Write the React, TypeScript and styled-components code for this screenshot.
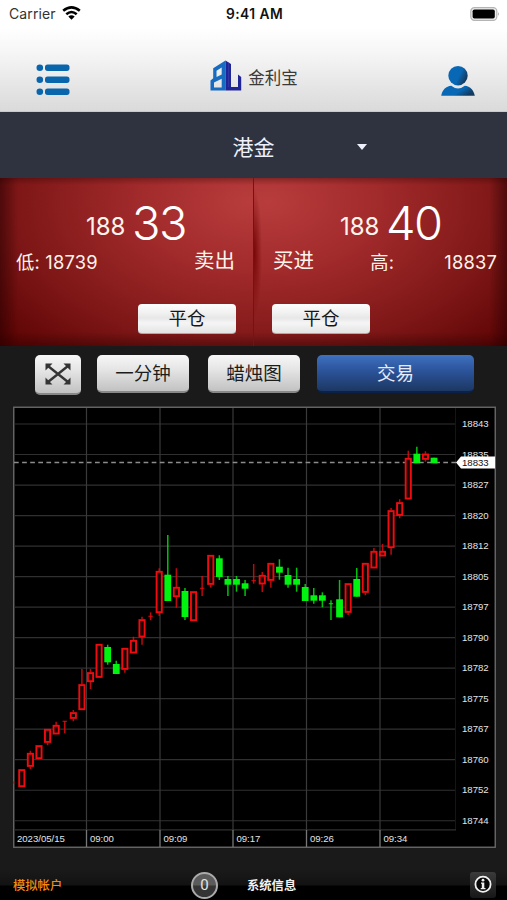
import React from "react";
import styled, { createGlobalStyle } from "styled-components";

const GlobalStyle = createGlobalStyle`
  * { box-sizing: border-box; }
  body {
    margin: 0;
    background: #1a1a1a;
    font-family: Inter, "Noto Sans CJK SC", sans-serif;
    overflow: hidden;
  }
`;

const Screen = styled.div`
  width: 507px;
  height: 900px;
  display: flex;
  flex-direction: column;
  background: #1a1a1a;
`;

const Top = styled.header`
  height: 112px;
  background: linear-gradient(#fff 0, #fff 28px, #f7f7f7 50px, #dadada 111px, #c9cacc 111px);
`;

const StatusBar = styled.div`
  display: grid;
  grid-template-columns: 1fr auto 1fr;
  align-items: center;
  height: 28px;
  padding: 0 7px 0 9px;
  font-size: 14px;
  line-height: 28px;
  color: #111;
`;

const Carrier = styled.div`
  display: flex;
  align-items: center;
  gap: 6px;
  color: #333;
  letter-spacing: 0.1px;

  svg { margin-top: -2px; }
`;

const Clock = styled.div`
  font-size: 13.8px;
  font-weight: 600;
  letter-spacing: 0.45px;
`;

const BatterySlot = styled.div`
  display: flex;
  justify-content: flex-end;
  margin-top: -1px;
`;

const NavBar = styled.div`
  display: grid;
  grid-template-columns: 1fr auto 1fr;
  height: 83px;
  padding: 31px 31px 0 36px;
`;

const NavButton = styled.button<{ $end?: boolean }>`
  display: flex;
  justify-self: ${(p) => (p.$end ? "end" : "start")};
  align-self: start;
  padding: ${(p) => (p.$end ? "6px 0 0" : "5px 0 0")};
  border: 0;
  background: none;
`;

const Brand = styled.div`
  display: flex;
  align-items: flex-start;
  gap: 6px;
  margin-right: 4px;
  padding-top: 1px;
`;

const BrandName = styled.span`
  font-size: 16.5px;
  line-height: 20px;
  margin-top: 8px;
  color: #3a3a3a;
`;

const SymbolBar = styled.div`
  display: grid;
  grid-template-columns: 1fr auto 1fr;
  align-items: center;
  height: 66px;
  padding-top: 2px;
  background: #2f333f;
  color: #eef1fb;
  font-size: 21px;
`;

const Caret = styled.span`
  margin-left: 82px;
  width: 0;
  margin-top: 2px;
  border: 5.5px solid transparent;
  border-top: 6px solid #eef1fb;
  border-bottom: 0;
`;

const Quotes = styled.section`
  display: grid;
  grid-template-columns: 254px 253px;
  height: 168px;
`;

const QuotePanel = styled.div<{ $side: "sell" | "buy" }>`
  padding-top: 20px;
  color: #fff4ec;
  background: ${(p) =>
    p.$side === "sell"
      ? "linear-gradient(90deg, rgba(35,0,0,.5), rgba(35,0,0,0) 18px), linear-gradient(rgba(40,0,0,.3), transparent 7px), linear-gradient(0deg, rgba(40,0,0,.4), transparent 14px), radial-gradient(330px 205px at 250px 24px, #b83c3c 0%, #a12a2b 34%, #7d1616 72%, #5c0303 100%)"
      : "linear-gradient(270deg, rgba(35,0,0,.5), rgba(35,0,0,0) 18px), linear-gradient(rgba(40,0,0,.3), transparent 7px), linear-gradient(0deg, rgba(40,0,0,.4), transparent 14px), radial-gradient(8px 65px at 0 75px, rgba(110,0,0,.85), transparent), radial-gradient(330px 205px at 14px 24px, #b83c3c 0%, #a12a2b 34%, #7d1616 72%, #5c0303 100%)"};
  border-right: ${(p) => (p.$side === "sell" ? "1px solid #701416" : "0")};
`;

const Price = styled.div`
  display: flex;
  height: 50px;
  padding-left: 86px;
`;

const PriceBase = styled.span`
  width: 46px;
  font-size: 24px;
  line-height: 50px;
  padding-top: 4px;
  letter-spacing: -0.1px;
`;

const PricePips = styled.span`
  font-size: 47px;
  font-weight: 350;
  line-height: 49px;
  letter-spacing: -1.6px;
  color: #fff;
`;

const Details = styled.div<{ $side: "sell" | "buy" }>`
  display: flex;
  justify-content: space-between;
  height: 28px;
  padding: ${(p) => (p.$side === "sell" ? "0 18px 0 16px" : "0 10px 0 19px")};
  line-height: 28px;
`;

const Extreme = styled.span<{ $shift?: boolean }>`
  margin-left: ${(p) => (p.$shift ? "6px" : "0")};
  font-size: 18.3px;
  letter-spacing: 0.2px;
`;

const Action = styled.span`
  font-size: 20.5px;
  line-height: 25px;
`;

const metal = "linear-gradient(#fdfdfd, #f1f1f1 30%, #e7e7e7 48%, #f5f5f5 65%, #e4e4e4)";

const CloseButton = styled.button<{ $side: "sell" | "buy" }>`
  display: block;
  width: 98px;
  height: 30px;
  margin: 28px 0 0 ${(p) => (p.$side === "sell" ? "138px" : "18px")};
  padding: 0;
  border: 0;
  border-bottom: 1px solid #aaa;
  border-radius: 4px;
  background: ${metal};
  color: #171717;
  font: 18.5px/29px Inter, "Noto Sans CJK SC", sans-serif;
`;

const Toolbar = styled.div`
  display: grid;
  grid-template-columns: 46px 92px 92px 157px;
  column-gap: 17px;
  align-items: start;
  height: 60px;
  padding: 9px 0 0 35px;
`;

const ToolButton = styled.button<{ $kind?: "icon" | "primary"; $nudge?: number }>`
  display: flex;
  align-items: center;
  justify-content: center;
  height: ${(p) => (p.$kind === "icon" ? "40px" : "38px")};
  margin: 0 ${(p) => -(p.$nudge ?? 0)}px 0 ${(p) => p.$nudge ?? 0}px;
  padding: 0;
  border: 0;
  border-bottom: 2px solid ${(p) => (p.$kind === "primary" ? "#0b2147" : "#888")};
  border-radius: 5px;
  background: ${(p) =>
    p.$kind === "primary"
      ? "linear-gradient(#3e71bf, #2b5399 45%, #1c3763)"
      : "linear-gradient(#f7f7f7, #e5e5e5 40%, #c2c2c2)"};
  color: ${(p) => (p.$kind === "primary" ? "#e4ecfc" : "#1c1c1c")};
  font: 18.5px/36px Inter, "Noto Sans CJK SC", sans-serif;
`;

const ChartFrame = styled.div`
  height: 442px;
  padding-left: 13px;

  svg { display: block; }
`;

const Footer = styled.footer`
  display: flex;
  align-items: center;
  height: 30px;
  margin-top: 22px;
  padding: 0 11px 0 13px;
  background: linear-gradient(#1a1a1a, #121212 15px, #000 16px);
  font-size: 12.3px;
  font-weight: 500;
`;

const Account = styled.span`
  width: 178px;
  color: #f58a0c;
`;

const Badge = styled.span`
  display: grid;
  place-items: center;
  width: 27px;
  height: 27px;
  border: 2px solid #aaa;
  border-radius: 50%;
  background: linear-gradient(#5b5b5b 48%, #343434 52%);
  color: #e5e5e5;
  font-size: 15px;
  font-family: Roboto, sans-serif;
  font-weight: 400;
`;

const Info = styled.span`
  flex: 1;
  margin-left: 29px;
  color: #f2f2f2;
  font-weight: 700;
`;

const InfoButton = styled.button`
  display: grid;
  place-items: center;
  width: 26px;
  height: 26px;
  padding: 0;
  border: 0;
  border-radius: 3px;
  background: linear-gradient(#3b3b3b, #171717);
`;

const X0 = 21.8;
const STEP = 8.588;

// direction, body top, body bottom, wick top, wick bottom
type Candle = ["r" | "g", number, number, number, number];
const candles: Candle[] = [
  ["r", 769.3, 787, 769.3, 787],
  ["r", 753, 766.7, 750.7, 769.3],
  ["r", 745.3, 759, 745.3, 759],
  ["r", 729, 742.7, 729, 745.3],
  ["r", 725, 734.3, 721.7, 734.3],
  ["r", 721.3, 721.3, 721, 733.3],
  ["r", 712.3, 718.7, 710, 721.3],
  ["r", 684.3, 710, 669, 710],
  ["r", 672.3, 682, 669, 689],
  ["r", 644, 677.7, 644, 677.7],
  ["g", 647, 662.3, 644.7, 664.7],
  ["g", 664, 674, 660.7, 674],
  ["r", 648, 669.7, 648, 672.7],
  ["r", 640, 653.3, 636.7, 653.3],
  ["r", 619.3, 637.3, 616.7, 644.7],
  ["r", 616.3, 616.3, 612.3, 620.3],
  ["r", 571, 613, 568.3, 616],
  ["g", 574.7, 601, 535, 601],
  ["r", 587, 597, 568.3, 607.7],
  ["g", 591, 617, 588, 620],
  ["r", 591.3, 621, 591.3, 621],
  ["r", 588.3, 588.3, 576, 596],
  ["r", 555, 584.7, 555, 587.7],
  ["g", 558.3, 577, 555.3, 580],
  ["g", 579, 584.7, 576, 596],
  ["g", 579, 584.7, 576, 591.7],
  ["g", 583.3, 588.7, 580, 596],
  ["r", 580.7, 580.7, 564, 583.7],
  ["r", 575, 584.3, 572, 592],
  ["r", 563, 580.7, 563, 587.7],
  ["g", 566.7, 572.7, 559.3, 579.7],
  ["g", 575, 584.7, 567.7, 587.7],
  ["g", 579, 584.7, 567.7, 591.7],
  ["g", 587, 601, 584, 601],
  ["g", 595.3, 600.7, 588, 603.7],
  ["g", 595.3, 600.7, 592.3, 607.3],
  ["g", 603.7, 603.7, 600.3, 620],
  ["g", 599.3, 617.3, 580, 617.3],
  ["r", 583.3, 612.7, 583.3, 615],
  ["g", 579, 596.7, 568, 596.7],
  ["r", 563, 592.7, 563, 595.3],
  ["r", 551, 568.3, 548, 568.3],
  ["r", 551, 556.3, 544, 556.3],
  ["r", 510.3, 548, 508, 554.7],
  ["r", 502.3, 515.7, 499.3, 518.3],
  ["r", 458, 499.3, 450.7, 499.3],
  ["g", 453.7, 463.3, 446.7, 463.3],
  ["r", 453.7, 459.7, 451.3, 461.7],
  ["g", 457.7, 463.3, 457.7, 463.3],
];

const levels = [18843, 18835, 18827, 18820, 18812, 18805, 18797, 18790, 18782, 18775, 18767, 18760, 18752, 18744];
const times: [string, number][] = [
  ["2023/05/15", 13.5],
  ["09:00", 86.5],
  ["09:09", 160],
  ["09:17", 233],
  ["09:26", 306.5],
  ["09:34", 380],
];

function CandleMark({ data, x }: { data: Candle; x: number }) {
  const [dir, top, bottom, high, low] = data;
  const color = dir === "r" ? "#ee0c10" : "#00f410";
  const dash = top === bottom;
  return (
    <g>
      {dir === "g" || dash ? (
        <line x1={x} x2={x} y1={high} y2={low} stroke={color} strokeWidth="1.5" opacity={0.8} />
      ) : (
        <path d={`M${x} ${high}V${top}M${x} ${bottom}V${low}`} stroke={color} strokeWidth="1.5" opacity={0.8} />
      )}
      {dash ? (
        <line x1={x - 2.2} x2={x + 2.2} y1={top} y2={top} stroke={color} strokeWidth="1.2" opacity={0.8} />
      ) : dir === "g" ? (
        <rect x={x - 3.4} y={top} width="6.8" height={bottom - top} fill={color} />
      ) : (
        <rect x={x - 2.6} y={top + 0.8} width="5.2" height={bottom - top - 1.6} fill="#160000" stroke={color} strokeWidth="1.9" />
      )}
    </g>
  );
}

function Chart() {
  return (
    <svg width="483" height="442" viewBox="13 406 483 442" fontFamily="'Liberation Sans', sans-serif" fontSize="9.6" fill="#e4e4e4">
      <rect x="13.75" y="407.25" width="481.5" height="440" fill="#000" stroke="#686868" strokeWidth="1.4" />
      {levels.map((v, i) => {
        const y = 424 + i * 30.52;
        return (
          <g key={v}>
            <line x1="14" x2="456" y1={y} y2={y} stroke="#303030" strokeWidth="1.2" />
            <text x="462" y={y + 3.2}>{v}</text>
          </g>
        );
      })}
      <path d="M455.5 408V830" stroke="#151515" />
      <path d="M14 829.8H456" stroke="#303030" strokeWidth="1.2" />
      {times.map(([label, x], i) => (
        <g key={label}>
          {i > 0 && <path d={`M${x} 408V830`} stroke="#3a3a3a" strokeWidth="1.2" />}
          {i > 0 && <path d={`M${x} 830V847`} stroke="#777" strokeWidth="1.3" />}
          <text x={x + 3.4} y="842.4">{label}</text>
        </g>
      ))}
      <path d="M14 462.5H456" stroke="#8c8c8c" strokeWidth="1.3" strokeDasharray="4.7 3.4" />
      {candles.map((c, i) => (
        <CandleMark key={i} data={c} x={X0 + i * STEP} />
      ))}
      <path d="M14 781.5v2" stroke="#900" />
      <path d="M456 462.5L461 456.5H495V468.5H461Z" fill="#fff" />
      <text x="462" y="465.9" fill="#111">18833</text>
    </svg>
  );
}

const WifiIcon = () => (
  <svg width="19" height="14" viewBox="0 0 19 14" fill="none" stroke="#000" strokeWidth="2.6">
    <path d="M1.2 4.8Q9.5 -2 17.8 4.8M4.3 8.2Q9.5 3.8 14.7 8.2" />
    <path d="M6.3 10.6Q9.5 7.8 12.7 10.6L9.5 13.8Z" fill="#000" stroke="none" />
  </svg>
);

const BatteryIcon = () => (
  <svg width="30" height="14" viewBox="0 0 30 14">
    <rect x="0.8" y="0.7" width="26" height="12.6" rx="3.6" fill="#eee" stroke="#b4b4b4" strokeWidth="1.2" />
    <rect x="2.6" y="2.5" width="22.2" height="9" rx="1.8" fill="#000" />
    <path d="M28.2 5q1.7 2 0 4z" fill="#999" />
  </svg>
);

const MenuIcon = () => (
  <svg width="34" height="32" viewBox="0 0 34 32" fill="#0966ad">
    {[4, 16, 28].map((y) => (
      <g key={y} transform="translate(0 -0.3)">
        <circle cx="3.8" cy={y} r="3.3" />
        <rect x="9" y={y - 3.2} width="24.5" height="6.4" rx="2.6" />
      </g>
    ))}
  </svg>
);

const UserIcon = () => (
  <svg width="36" height="32" viewBox="0 0 36 32">
    <defs>
      <linearGradient id="user" x1="0" x2="1" y2="0.45">
        <stop offset="0.65" stopColor="#0868b5" />
        <stop offset="1" stopColor="#143b60" />
      </linearGradient>
    </defs>
    <circle cx="18" cy="10.7" r="9.7" fill="url(#user)" />
    <path d="M1.2 30.8C2.6 24.5 6 21.3 11.2 20.8Q18 26.3 24.8 20.8C30.2 21.3 33.5 24.8 34.8 30.8Z" fill="url(#user)" />
  </svg>
);

const LogoIcon = () => (
  <svg width="32" height="32" viewBox="0 0 32 32">
    <path fillRule="evenodd" fill="#176bc0" d="M3.2 8.2L15.5 0.5V30.5H0.5V20.5L3.2 18.2ZM6.5 10.8V17L11.7 14.5V7.5ZM4 22.5V27.5H11.7V18.7Z" />
    <path fill="#1f2596" d="M15.5 0.5L21 4V27H28V14.5L31.2 17V30.5H15.5Z" />
    <path d="M18.7 2.6V27" stroke="#3c3fa6" strokeWidth="0.8" />
  </svg>
);

const ExpandIcon = () => (
  <svg width="28" height="24" viewBox="0 0 28 24" fill="#343434">
    <path d="M4 4L24 20M24 4L4 20" stroke="#343434" strokeWidth="2.4" />
    <path d="M1.5 1.5H8.5L1.5 8.5ZM26.5 1.5H19.5L26.5 8.5ZM1.5 22.5H8.5L1.5 15.5ZM26.5 22.5H19.5L26.5 15.5Z" />
  </svg>
);

const InfoIcon = () => (
  <svg width="20" height="20" viewBox="0 0 20 20">
    <circle cx="10" cy="9.3" r="7.6" fill="#080808" stroke="#f0f0f0" strokeWidth="1.8" />
    <circle cx="10" cy="5.2" r="1.4" fill="#f0f0f0" />
    <path d="M8 7.6H11.3V13.1H12.5V14.3H7.7V13.1H8.8V8.7H8Z" fill="#f0f0f0" />
  </svg>
);

export default function App() {
  return (
    <Screen>
      <GlobalStyle />
      <Top>
        <StatusBar>
          <Carrier>Carrier <WifiIcon /></Carrier>
          <Clock>9:41 AM</Clock>
          <BatterySlot><BatteryIcon /></BatterySlot>
        </StatusBar>
        <NavBar>
          <NavButton aria-label="菜单"><MenuIcon /></NavButton>
          <Brand>
            <LogoIcon />
            <BrandName>金利宝</BrandName>
          </Brand>
          <NavButton $end aria-label="用户"><UserIcon /></NavButton>
        </NavBar>
      </Top>
      <SymbolBar>
        <span />
        <span>港金</span>
        <Caret />
      </SymbolBar>
      <Quotes>
        <QuotePanel $side="sell">
          <Price><PriceBase>188</PriceBase><PricePips>33</PricePips></Price>
          <Details $side="sell"><Extreme>低: 18739</Extreme><Action>卖出</Action></Details>
          <CloseButton $side="sell">平仓</CloseButton>
        </QuotePanel>
        <QuotePanel $side="buy">
          <Price><PriceBase>188</PriceBase><PricePips>40</PricePips></Price>
          <Details $side="buy"><Action>买进</Action><Extreme $shift>高:</Extreme><Extreme>18837</Extreme></Details>
          <CloseButton $side="buy">平仓</CloseButton>
        </QuotePanel>
      </Quotes>
      <Toolbar>
        <ToolButton $kind="icon" aria-label="全屏"><ExpandIcon /></ToolButton>
        <ToolButton $nudge={-1}>一分钟</ToolButton>
        <ToolButton $nudge={1}>蜡烛图</ToolButton>
        <ToolButton $kind="primary" $nudge={1}>交易</ToolButton>
      </Toolbar>
      <ChartFrame><Chart /></ChartFrame>
      <Footer>
        <Account>模拟帐户</Account>
        <Badge>0</Badge>
        <Info>系统信息</Info>
        <InfoButton aria-label="信息"><InfoIcon /></InfoButton>
      </Footer>
    </Screen>
  );
}
